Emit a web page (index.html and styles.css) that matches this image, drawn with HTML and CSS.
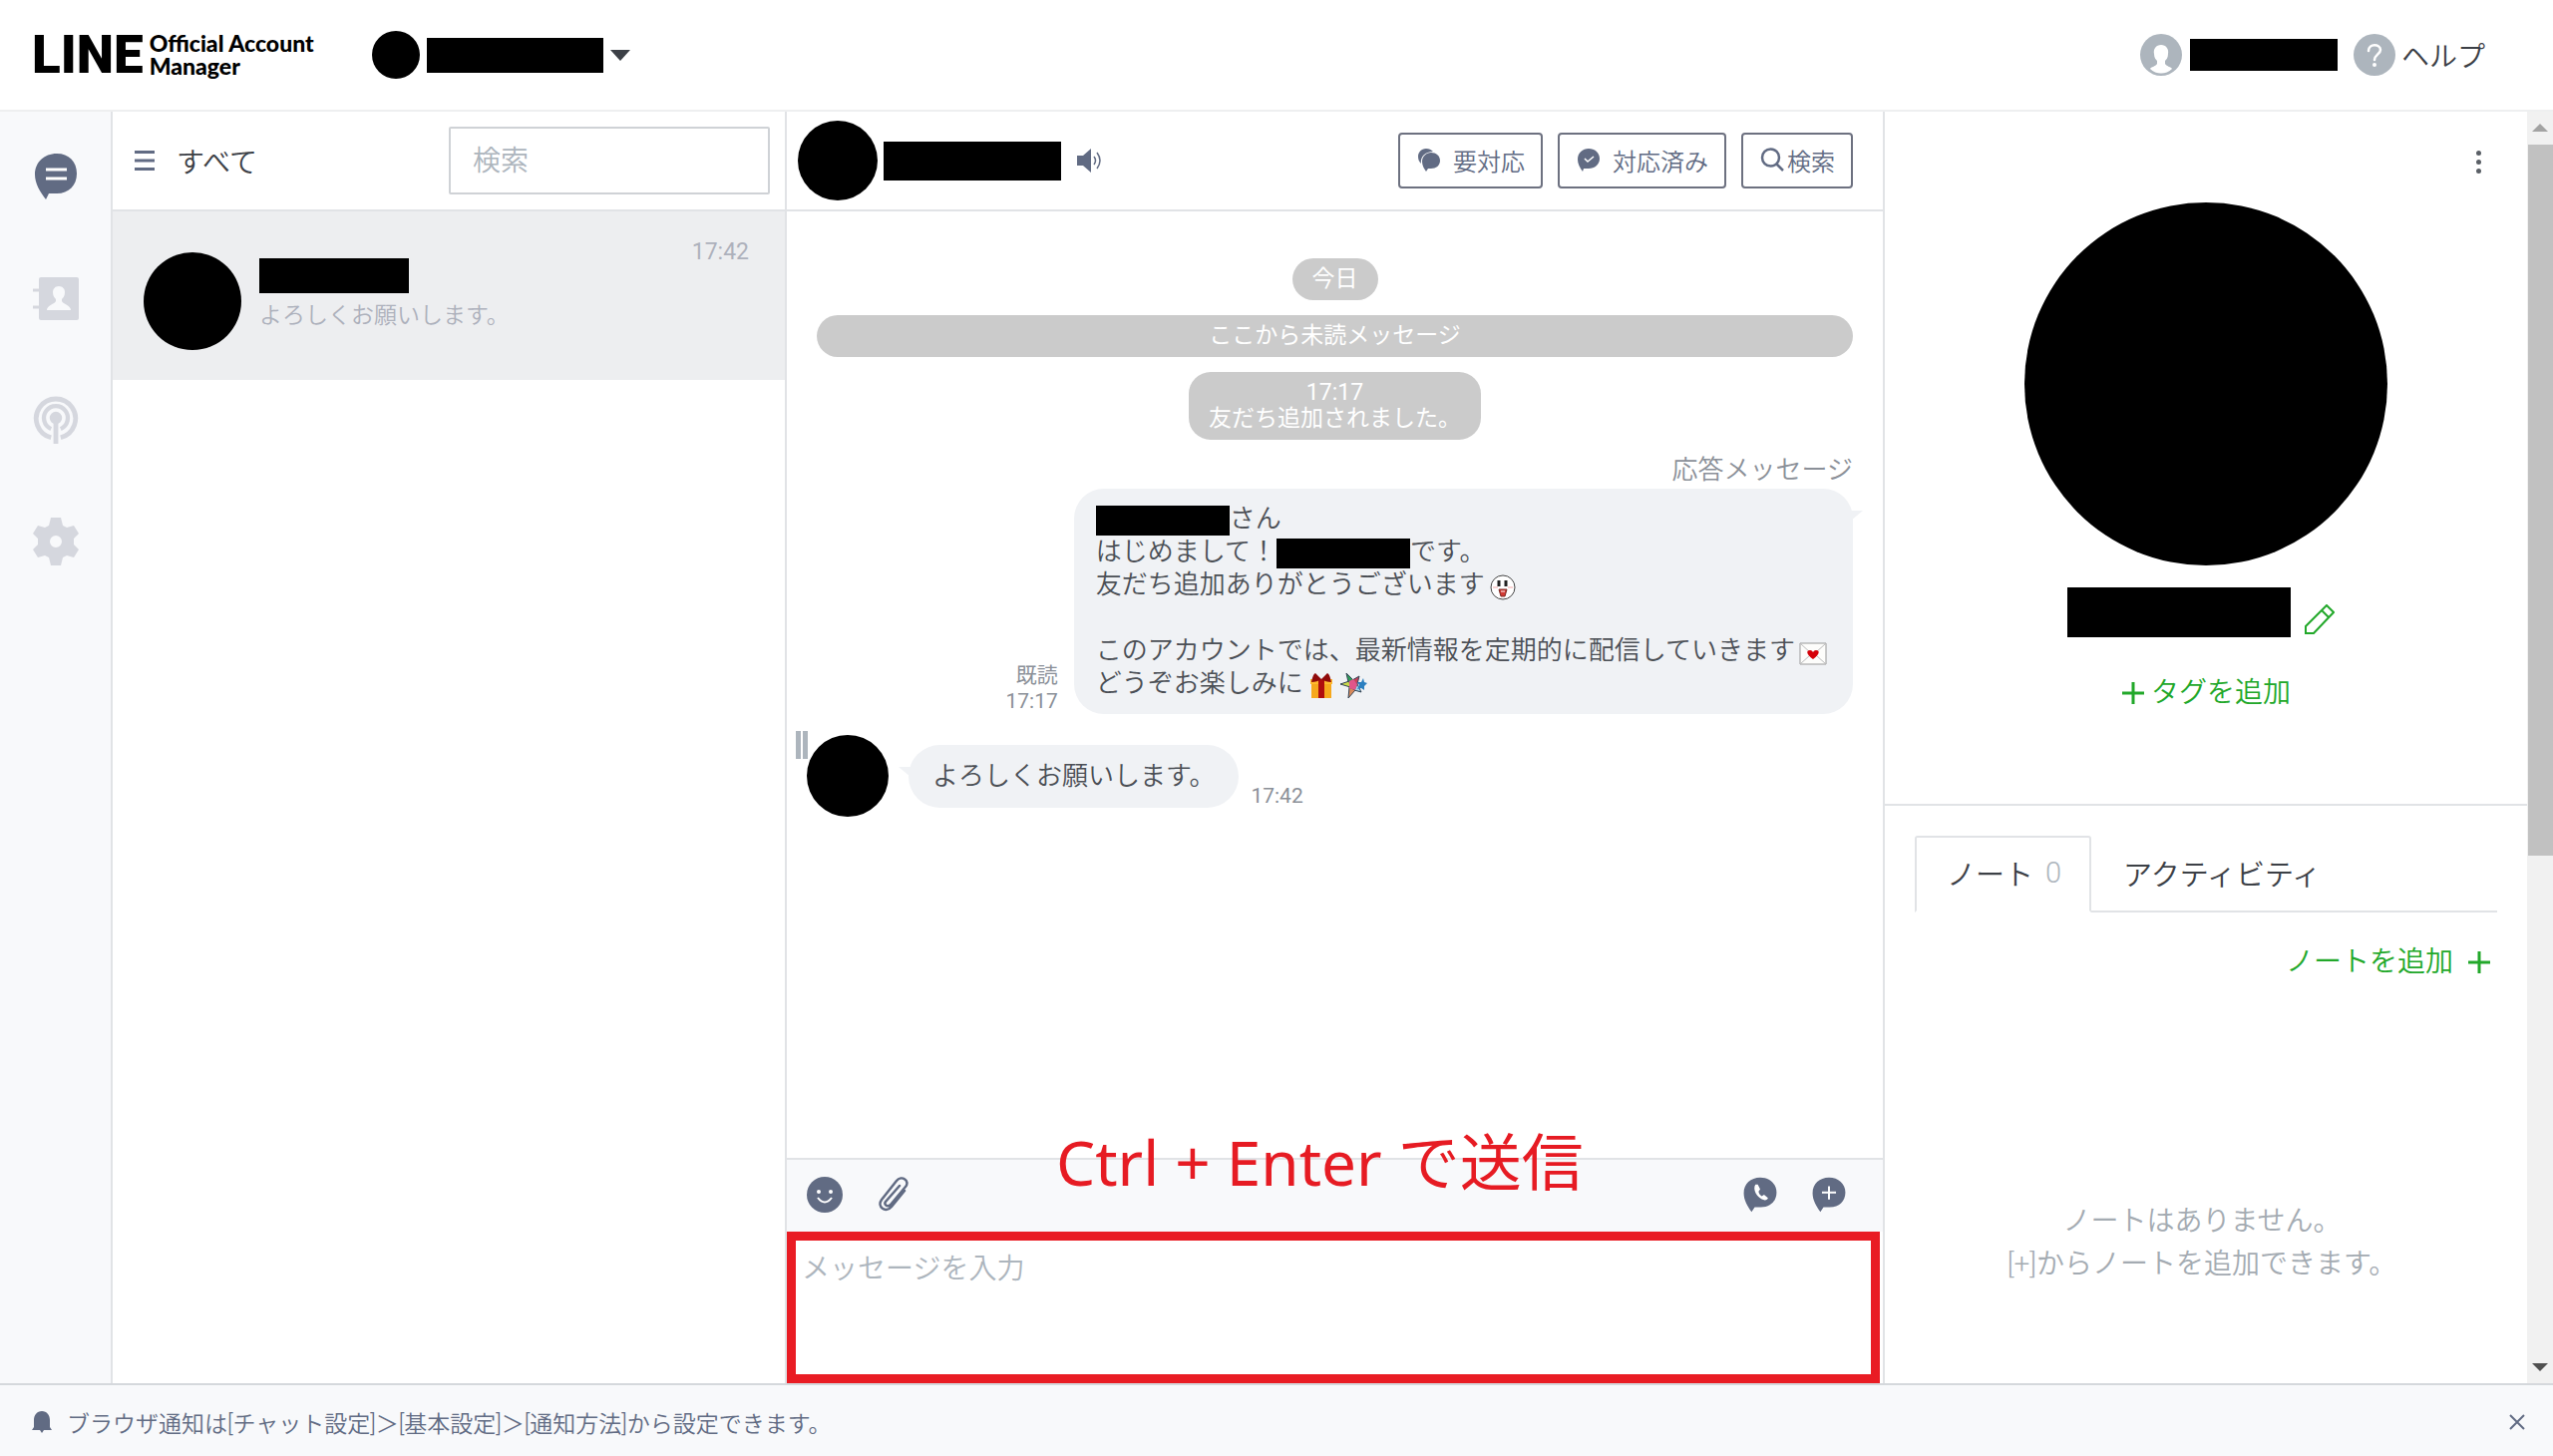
FILE: index.html
```
<!DOCTYPE html>
<html lang="ja">
<head>
    <meta charset="UTF-8">
    <meta name="viewport" content="width=device-width, initial-scale=1.0">
    <title>LINE Official Account Manager</title>
    <link rel="stylesheet" href="styles.css">
</head>
<body>

    <!-- 共通アイコン -->
    <svg class="sprite" aria-hidden="true">
        <symbol id="balloon" viewBox="0 0 44 46">
            <path d="M22 1C10 1 1 9 1 21c0 9 5 17 10 24l4-6h8c12 0 20-8 20-19S34 1 22 1z"/>
        </symbol>
        <symbol id="plus" viewBox="0 0 24 24">
            <path d="M12 1v22M1 12h22" fill="none" stroke="currentColor" stroke-width="3"/>
        </symbol>
    </svg>

    <header class="header">
        <a class="logo" href="#">
            <span class="logo-line">LINE</span>
            <span class="logo-sub">Official Account<br>Manager</span>
        </a>
        <button class="account" aria-label="アカウント切り替え">
            <span class="avatar avatar-s"></span>
            <span class="mask mask-account"></span>
            <span class="caret"></span>
        </button>
        <div class="header-right">
            <svg class="icon-round" viewBox="0 0 42 42">
                <circle cx="21" cy="21" r="21" fill="#adb5bd"/>
                <path d="M21 11c-5 0-8 4-7 9 0 4 2 6 3 7v3c-2 3-6 3-7 5 6 6 16 6 22 0-1-2-5-2-7-5v-3c1-1 3-3 3-7 1-5-2-9-7-9z" fill="#fff"/>
            </svg>
            <span class="mask mask-user"></span>
            <a class="help" href="#">
                <svg class="icon-round" viewBox="0 0 42 42">
                    <circle cx="21" cy="21" r="21" fill="#adb5bd"/>
                    <path d="M15 17c0-8 12-7 12-1 0 4-6 5-6 10" fill="none" stroke="#fff" stroke-width="2.5" stroke-linecap="round"/>
                    <circle cx="21" cy="31" r="2" fill="#fff"/>
                </svg>
                ヘルプ
            </a>
        </div>
    </header>

    <main class="main">
        <nav class="rail">
            <a class="active" href="#" aria-label="チャット">
                <svg viewBox="0 0 46 48">
                    <path d="M24 1C11 1 2 10 2 22c0 9 5 17 11 25l3-6h8c12 0 20-8 20-20S36 1 24 1z"/>
                    <path d="M13 17h21M13 26h21" stroke="#fff" stroke-width="3"/>
                </svg>
            </a>
            <a href="#" aria-label="連絡先">
                <svg viewBox="0 0 46 48">
                    <rect x="6" y="3" width="40" height="43" rx="2"/>
                    <path d="M0 16h7M0 33h7" stroke="#d5d7de" stroke-width="3"/>
                    <path d="M26 12c-4 0-6 3-6 6 0 4 2 6 3 7v2c-1 3-9 4-9 9h24c0-5-8-6-9-9v-2c1-1 3-3 3-7 0-3-2-6-6-6z" fill="#f8f9fb"/>
                </svg>
            </a>
            <a href="#" aria-label="一斉送信">
                <svg viewBox="0 0 46 50">
                    <path d="M18 43.500A20.500 20.500 0 1 1 28 43.500" fill="none" stroke="#d5d7de" stroke-width="5"/>
                    <path d="M18 34.500A12.500 12.500 0 1 1 28 34.500" fill="none" stroke="#d5d7de" stroke-width="4.500"/>
                    <circle cx="23" cy="23" r="6.500"/>
                    <path d="M23 23v27" stroke="#d5d7de" stroke-width="5"/>
                </svg>
            </a>
            <a href="#" aria-label="設定">
                <svg viewBox="0 0 46 48">
                    <path fill-rule="evenodd" d="M18 0h10l2 8 4 2 7-2 5 8-5 5v6l5 5-5 8-7-2-4 2-2 8H18l-2-8-4-2-7 2-5-8 5-5v-6l-5-5 5-8 7 2 4-2zM23 18a6 6 0 1 0 0 12a6 6 0 1 0 0-12z"/>
                </svg>
            </a>
        </nav>

        <section class="list">
            <div class="list-head">
                <button class="filter">
                    <svg viewBox="0 0 20 20"><path d="M0 1.500h20M0 10h20M0 18.500h20" stroke="#616b83" stroke-width="3"/></svg>
                    すべて
                </button>
                <input class="search" type="text" placeholder="検索" aria-label="検索">
            </div>
            <a class="talk" href="#">
                <span class="avatar avatar-l"></span>
                <span class="talk-body">
                    <span class="mask mask-talk"></span>
                    <span class="talk-text">よろしくお願いします。</span>
                </span>
                <time>17:42</time>
            </a>
        </section>

        <section class="chat">
            <div class="chat-head">
                <span class="avatar avatar-m"></span>
                <span class="mask mask-chat"></span>
                <svg class="sound" viewBox="0 0 26 26">
                    <path d="M0 8h6l8-7v24l-8-7H0z" fill="#616b83"/>
                    <path d="M17 9q3 4 0 8M20 5q6 8 0 16" fill="none" stroke="#616b83" stroke-width="1.500"/>
                </svg>
                <div class="chat-actions">
                    <button>
                        <svg viewBox="0 0 24 24">
                            <path d="M9 1C4 1 1 5 1 9c0 3 1 5 3 7C3 9 8 4 16 4c-2-2-4-3-7-3z"/>
                            <path d="M14 5c-5 0-9 4-9 9 0 4 2 7 4 10l2-3h3c5 0 9-3 9-8s-4-8-9-8z"/>
                        </svg>
                        要対応
                    </button>
                    <button>
                        <svg viewBox="0 0 24 24">
                            <path d="M12 1C6 1 1 5 1 12c0 4 2 8 5 12l1-3h5c6 0 11-4 11-10S18 1 12 1z"/>
                            <path d="M8 11l3 3 6-5" fill="none" stroke="#fff" stroke-width="1.500"/>
                        </svg>
                        対応済み
                    </button>
                    <button class="find">
                        <svg viewBox="0 0 24 24"><path d="M17 17l6 6M19 10a8.500 8.500 0 1 1-17 0a8.500 8.500 0 1 1 17 0z" fill="none" stroke="#616b83" stroke-width="2.500"/></svg>
                        検索
                    </button>
                </div>
            </div>

            <div class="messages">
                <p class="chip">今日</p>
                <p class="chip chip-wide">ここから未読メッセージ</p>
                <p class="chip">17:17<br>友だち追加されました。</p>

                <div class="sent">
                    <p class="sent-label">応答メッセージ</p>
                    <div class="sent-row">
                        <p class="meta">既読<br>17:17</p>
                        <div class="bubble bubble-sent">
                            <p><span class="mask mask-word"></span>さん</p>
                            <p>はじめまして！<span class="mask mask-word"></span>です。</p>
                            <p>友だち追加ありがとうございます<svg class="emoji" viewBox="0 0 28 28">
                                <circle cx="14" cy="15" r="12" fill="#fff" stroke="#444"/>
                                <path d="M10 8v6M17 8v6" stroke="#222" stroke-width="3"/>
                                <path d="M4 15h5M19 15h5" stroke="#f3a6a6"/>
                                <path d="M10 17h8l-2 7h-4z" fill="#d33a34" stroke="#7a2a25"/>
                                <path d="M12 19h4" stroke="#fff"/>
                            </svg></p>
                            <p>&nbsp;</p>
                            <p>このアカウントでは、最新情報を定期的に配信していきます<svg class="emoji" viewBox="0 0 28 28">
                                <path d="M1 5h26v21H1z" fill="#fdfdfb" stroke="#999"/>
                                <path d="M1 5l11 10M27 5L16 15M1 26l10-9M27 26l-10-9" stroke="#bbb"/>
                                <path d="M14 21c-7-5-7-9-3-9 2 0 3 2 3 2s1-2 3-2c4 0 4 4-3 9z" fill="#d50008"/>
                            </svg></p>
                            <p>どうぞお楽しみに<svg class="emoji" viewBox="0 0 28 28">
                                <path d="M4 10h20v17H4z" fill="#f6a81c"/>
                                <path d="M3 8h22v5H3z" fill="#ffb92e"/>
                                <path d="M11 8h6v19h-6z" fill="#b00d0d"/>
                                <path d="M14 8L8 2C5 4 5 8 4 11c4 0 7-1 10-3 3 2 6 3 10 3-1-3-1-7-4-9z" fill="#8f0a0a"/>
                            </svg><svg class="emoji" viewBox="0 0 28 28">
                                <path d="M7 2l7 7-5 2z" fill="#2f9e58" stroke="#345"/>
                                <path d="M20 5l-2 8-5-4z" fill="#c8405a" stroke="#345"/>
                                <path d="M1 13l9-3 1 6z" fill="#c9d94a" stroke="#345"/>
                                <path d="M9 27l1-11 6 3z" fill="#d98a5a" stroke="#345"/>
                                <path d="M22 21l-7-2 3-6z" fill="#9fd4ea" stroke="#345"/>
                                <path d="M10 10l4-2 4 5-2 6-6-2z" fill="#e0568a"/>
                                <path d="M24 7l1 4 3 1-3 3v4l-3-2-4 1 2-4-2-3 4 0z" fill="#2b7fc0"/>
                            </svg></p>
                        </div>
                    </div>
                </div>

                <div class="received">
                    <span class="grip"></span>
                    <span class="avatar avatar-m"></span>
                    <p class="bubble bubble-received">よろしくお願いします。</p>
                    <p class="meta">17:42</p>
                </div>
            </div>

            <div class="composer">
                <p class="hint">Ctrl + Enter で送信</p>
                <div class="toolbar">
                    <button aria-label="スタンプ">
                        <svg viewBox="0 0 36 36">
                            <circle cx="18" cy="18" r="18"/>
                            <circle cx="12" cy="15" r="2" fill="#fff"/>
                            <circle cx="24" cy="15" r="2" fill="#fff"/>
                            <path d="M11 21q7 9 14 0" fill="none" stroke="#fff" stroke-width="2"/>
                        </svg>
                    </button>
                    <button aria-label="ファイル添付">
                        <svg viewBox="0 0 36 36">
                            <path d="M29 14L16 30c-6 7-15 0-10-7L21 4c5-6 14 0 9 6L15 28c-3 3-7 0-5-3L24 9" fill="none" stroke="#616b83" stroke-width="2.500" stroke-linecap="round"/>
                        </svg>
                    </button>
                    <span class="spacer"></span>
                    <button aria-label="通話">
                        <svg viewBox="0 0 44 46">
                            <use href="#balloon"/>
                            <path d="M16 10c-4 5 1 18 12 20 2 0 4-2 4-3l-5-4-3 2c-2-1-4-4-4-6l2-3-3-6z" fill="#fff"/>
                        </svg>
                    </button>
                    <button aria-label="追加">
                        <svg viewBox="0 0 44 46">
                            <use href="#balloon"/>
                            <path d="M22 12v17M13 20h18" stroke="#fff" stroke-width="2.500"/>
                        </svg>
                    </button>
                </div>
                <textarea class="message-input" placeholder="メッセージを入力" aria-label="メッセージを入力"></textarea>
            </div>
        </section>

        <aside class="profile">
            <div class="profile-main">
                <button class="more" aria-label="メニュー"><span></span><span></span><span></span></button>
                <span class="avatar avatar-xl"></span>
                <div class="profile-name">
                    <span class="mask mask-name"></span>
                    <button aria-label="名前を編集">
                        <svg viewBox="0 0 30 30"><path d="M1 22L22 1l7 7L9 29H1zM17 6l7 7" fill="none" stroke="#22a82a" stroke-width="2"/></svg>
                    </button>
                </div>
                <button class="link-btn"><svg><use href="#plus"/></svg>タグを追加</button>
            </div>
            <div class="notes">
                <div class="tabs">
                    <button class="tab active">ノート <span>0</span></button>
                    <button class="tab">アクティビティ</button>
                </div>
                <button class="link-btn add-note">ノートを追加<svg><use href="#plus"/></svg></button>
                <p class="empty">ノートはありません。<br>[+]からノートを追加できます。</p>
            </div>
        </aside>

        <div class="scrollbar">
            <span class="arrow arrow-up"></span>
            <span class="thumb"></span>
            <span class="arrow arrow-down"></span>
        </div>
    </main>

    <footer class="footer">
        <svg class="bell" viewBox="0 0 20 22"><path d="M10 0C5 0 2 4 2 9v7l-2 3h8l2 3 2-3h8l-2-3V9c0-5-3-9-8-9z" fill="#616b83"/></svg>
        <p>ブラウザ通知は[チャット設定]＞[基本設定]＞[通知方法]から設定できます。</p>
        <button aria-label="閉じる">
            <svg viewBox="0 0 16 16"><path d="M1 1l14 14M15 1L1 15" stroke="#616b83" stroke-width="2"/></svg>
        </button>
    </footer>

</body>
</html>
```
FILE: styles.css
```
* {
    box-sizing: border-box;
}

body {
    margin: 0;
    height: 100vh;
    display: flex;
    flex-direction: column;
    background-color: #fff;
    color: #3c4046;
    font-family: Roboto, "Noto Sans CJK JP", sans-serif;
    font-size: 28px;
    font-weight: 350;
}

p {
    margin: 0;
}

a {
    color: inherit;
    text-decoration: none;
}

button {
    display: flex;
    align-items: center;
    padding: 0;
    border: none;
    background: none;
    color: inherit;
    font: inherit;
    cursor: pointer;
}

svg {
    display: block;
    flex: none;
}

.sprite {
    position: absolute;
    width: 0;
    height: 0;
}

/* 伏せ字とアバター */
.mask {
    display: block;
    flex: none;
    background-color: #000;
}

.mask-account {
    width: 177px;
    height: 35px;
}

.mask-user {
    width: 148px;
    height: 32px;
}

.mask-talk {
    width: 150px;
    height: 35px;
}

.mask-chat {
    width: 178px;
    height: 39px;
}

.mask-word {
    display: inline-block;
    width: 134px;
    height: 30px;
    vertical-align: middle;
}

.mask-name {
    width: 224px;
    height: 50px;
}

.avatar {
    display: block;
    flex: none;
    border-radius: 50%;
    background-color: #000;
}

.avatar-s {
    width: 48px;
    height: 48px;
}

.avatar-m {
    width: 80px;
    height: 80px;
}

.avatar-l {
    width: 98px;
    height: 98px;
}

.avatar-xl {
    width: 364px;
    height: 364px;
}

/* ヘッダー */
.header {
    display: flex;
    align-items: center;
    height: 112px;
    padding: 0 68px 0 32px;
    border-bottom: 2px solid #eeeff0;
}

.logo {
    display: flex;
    align-items: center;
    gap: 6px;
    color: #000;
}

.logo-line {
    font-size: 53px;
    font-weight: 900;
    line-height: 48px;
}

.logo-sub {
    font-family: Lato, sans-serif;
    font-size: 23px;
    font-weight: 900;
    line-height: 23px;
}

.account {
    gap: 7px;
    margin-left: 58px;
}

.caret {
    border: 10px solid transparent;
    border-top: 11px solid #3c4046;
    border-bottom: 0;
}

.header-right {
    display: flex;
    align-items: center;
    gap: 8px;
    margin-left: auto;
}

.icon-round {
    width: 42px;
    height: 42px;
}

.help {
    display: flex;
    align-items: center;
    gap: 6px;
    margin-left: 8px;
}

.main {
    flex: 1;
    display: flex;
    min-height: 0;
}

/* 左メニュー */
.rail {
    display: flex;
    flex-direction: column;
    align-items: center;
    gap: 74px;
    width: 113px;
    padding-top: 41px;
    border-right: 2px solid #e1e3e6;
    background-color: #f8f9fb;
    fill: #d5d7de;
}

.rail svg {
    width: 46px;
    height: 48px;
}

.rail .active {
    fill: #616b83;
}

/* トーク一覧 */
.list {
    width: 676px;
    border-right: 2px solid #e1e3e6;
}

.list-head,
.chat-head {
    display: flex;
    align-items: center;
    height: 100px;
    border-bottom: 2px solid #e1e3e6;
}

.list-head {
    justify-content: space-between;
    padding: 0 15px 0 22px;
}

.filter {
    gap: 22px;
    font-size: 28px;
}

.filter svg {
    width: 20px;
    height: 20px;
}

.search {
    width: 322px;
    height: 68px;
    padding: 0 22px;
    border: 2px solid #cfd2d6;
    border-radius: 2px;
    font: inherit;
    font-size: 28px;
}

.search::placeholder,
.message-input::placeholder {
    color: #adb5bd;
    opacity: 1;
}

.talk {
    display: flex;
    gap: 18px;
    height: 169px;
    padding: 0 36px 0 31px;
    background-color: #edeef0;
    color: #adb1bc;
}

.talk .avatar {
    margin-top: 41px;
}

.talk-body {
    flex: 1;
    padding-top: 47px;
}

.talk-text {
    display: block;
    margin-top: 6px;
    font-size: 23px;
    line-height: 34px;
}

.talk time {
    padding-top: 28px;
    font-size: 23px;
    font-weight: 400;
    line-height: 26px;
}

/* チャット */
.chat {
    flex: 1;
    display: flex;
    flex-direction: column;
    min-width: 0;
}

.chat-head {
    padding: 0 30px 0 11px;
}

.mask-chat {
    margin: 0 16px 0 6px;
}

.sound {
    width: 26px;
    height: 26px;
}

.chat-actions {
    display: flex;
    gap: 15px;
    margin-left: auto;
}

.chat-actions button {
    gap: 12px;
    height: 56px;
    padding: 0 16px 2px 17px;
    border: 2px solid #6d7180;
    border-radius: 4px;
    color: #616b83;
    fill: #616b83;
    font-size: 24px;
}

.chat-actions svg {
    width: 24px;
    height: 24px;
}

.chat-actions .find {
    gap: 3px;
}

.messages {
    flex: 1;
    display: flex;
    flex-direction: column;
    align-items: center;
    gap: 15px;
    padding: 47px 30px 0;
}

.chip {
    padding: 8px 20px;
    border-radius: 22px;
    background-color: #cbcbcb;
    color: #fff;
    font-size: 23px;
    font-weight: 400;
    line-height: 26px;
    text-align: center;
}

.chip-wide {
    width: 100%;
}

.sent {
    align-self: flex-end;
    color: #8b9098;
}

.sent-label {
    font-size: 26px;
    line-height: 30px;
    text-align: right;
}

.sent-row {
    display: flex;
    align-items: flex-end;
    gap: 16px;
    margin-top: 4px;
}

.meta {
    color: #8b9098;
    font-size: 21px;
    font-weight: 400;
    line-height: 26px;
    text-align: right;
}

.bubble {
    position: relative;
    padding: 14px 26px 14px 22px;
    border-radius: 30px;
    background-color: #f0f2f5;
    color: #4b4f55;
    font-size: 26px;
    line-height: 33px;
}

.bubble p {
    height: 33px;
}

.bubble::after {
    content: "";
    position: absolute;
    top: 22px;
    border: 6px solid transparent;
    border-width: 10px 12px;
    border-top-color: #f0f2f5;
}

.bubble-sent::after {
    right: -10px;
}

.bubble-received::after {
    left: -10px;
}

.emoji {
    display: inline-block;
    width: 28px;
    height: 28px;
    margin-left: 4px;
    vertical-align: middle;
}

.received {
    position: relative;
    display: flex;
    align-items: center;
    align-self: stretch;
    gap: 20px;
    margin: 6px 0 0 -10px;
}

.received .avatar {
    width: 82px;
    height: 82px;
}

.received .bubble {
    padding: 15px 24px;
    border-radius: 32px;
}

.received .meta {
    margin-left: -8px;
    padding-top: 40px;
}

.grip {
    position: absolute;
    top: -4px;
    left: -11px;
    width: 12px;
    height: 28px;
    border: solid #adb5bd;
    border-width: 0 5px;
}

/* 入力エリア */
.composer {
    position: relative;
}

.hint {
    position: absolute;
    top: -42px;
    left: 270px;
    color: #e61b23;
    font-family: "Noto Sans", "Noto Sans CJK JP", sans-serif;
    font-size: 62px;
    font-weight: 400;
    line-height: 92px;
    white-space: nowrap;
}

.toolbar {
    display: flex;
    align-items: center;
    gap: 33px;
    height: 74px;
    padding: 0 36px 3px 20px;
    border-top: 2px solid #e1e3e6;
    background-color: #f8f9fb;
    fill: #616b83;
}

.toolbar svg {
    width: 36px;
    height: 36px;
}

.spacer {
    flex: 1;
}

.message-input {
    display: block;
    width: calc(100% - 3px);
    height: 152px;
    padding: 6px;
    border: 9px solid #e91c24;
    outline: none;
    resize: none;
    font: inherit;
    font-size: 28px;
}

/* プロフィール */
.profile {
    width: 646px;
    border-left: 2px solid #e1e3e6;
}

.profile-main {
    display: flex;
    flex-direction: column;
    align-items: center;
    height: 696px;
    padding: 39px 0 0;
    border-bottom: 2px solid #e1e3e6;
}

.more {
    flex-direction: column;
    align-self: flex-end;
    gap: 4px;
    margin: 0 46px 29px 0;
}

.more span {
    width: 5px;
    height: 5px;
    border-radius: 50%;
    background-color: #5a5f66;
}

.profile-name {
    display: flex;
    align-items: center;
    gap: 14px;
    margin: 22px 0 36px;
    padding-right: 10px;
}

.profile-name svg {
    width: 30px;
    height: 30px;
    margin-top: 14px;
}

.link-btn {
    gap: 6px;
    color: #22a82a;
    line-height: 40px;
}

.link-btn svg {
    width: 24px;
    height: 24px;
}

.notes {
    padding: 30px 30px 0;
}

.tabs {
    display: flex;
    border-bottom: 2px solid #e1e3e6;
}

.tab {
    height: 75px;
    padding: 0 32px 2px;
    font-size: 29px;
}

.tab.active {
    gap: 12px;
    margin-bottom: -2px;
    height: 77px;
    padding: 0 28px 4px 30px;
    border: 2px solid #e1e3e6;
    border-bottom-color: #fff;
    border-radius: 3px 3px 0 0;
}

.tab span {
    color: #adb5bd;
}

.add-note {
    gap: 14px;
    margin: 30px 6px 0 auto;
}

.empty {
    margin-top: 218px;
    padding-right: 8px;
    color: #a4abb2;
    line-height: 43px;
    text-align: center;
}

.scrollbar {
    display: flex;
    flex-direction: column;
    align-items: center;
    width: 26px;
    padding: 12px 0;
    background-color: #f1f1f1;
}

.thumb {
    flex: 0 0 57%;
    width: 25px;
    margin-top: 13px;
    background-color: #c1c1c1;
}

.arrow {
    border: 8px solid transparent;
}

.arrow-up {
    border-top: 0;
    border-bottom-color: #a3a3a3;
}

.arrow-down {
    margin-top: auto;
    border-bottom: 0;
    border-top-color: #505050;
}

/* お知らせ */
.footer {
    display: flex;
    align-items: center;
    height: 73px;
    padding: 2px 28px 0 32px;
    border-top: 2px solid #d5d8dc;
    background-color: #f8f9fb;
    color: #616b83;
    font-size: 23px;
}

.bell {
    width: 20px;
    height: 22px;
    margin-right: 15px;
}

.footer button {
    margin-left: auto;
}

.footer button svg {
    width: 16px;
    height: 16px;
}
```
